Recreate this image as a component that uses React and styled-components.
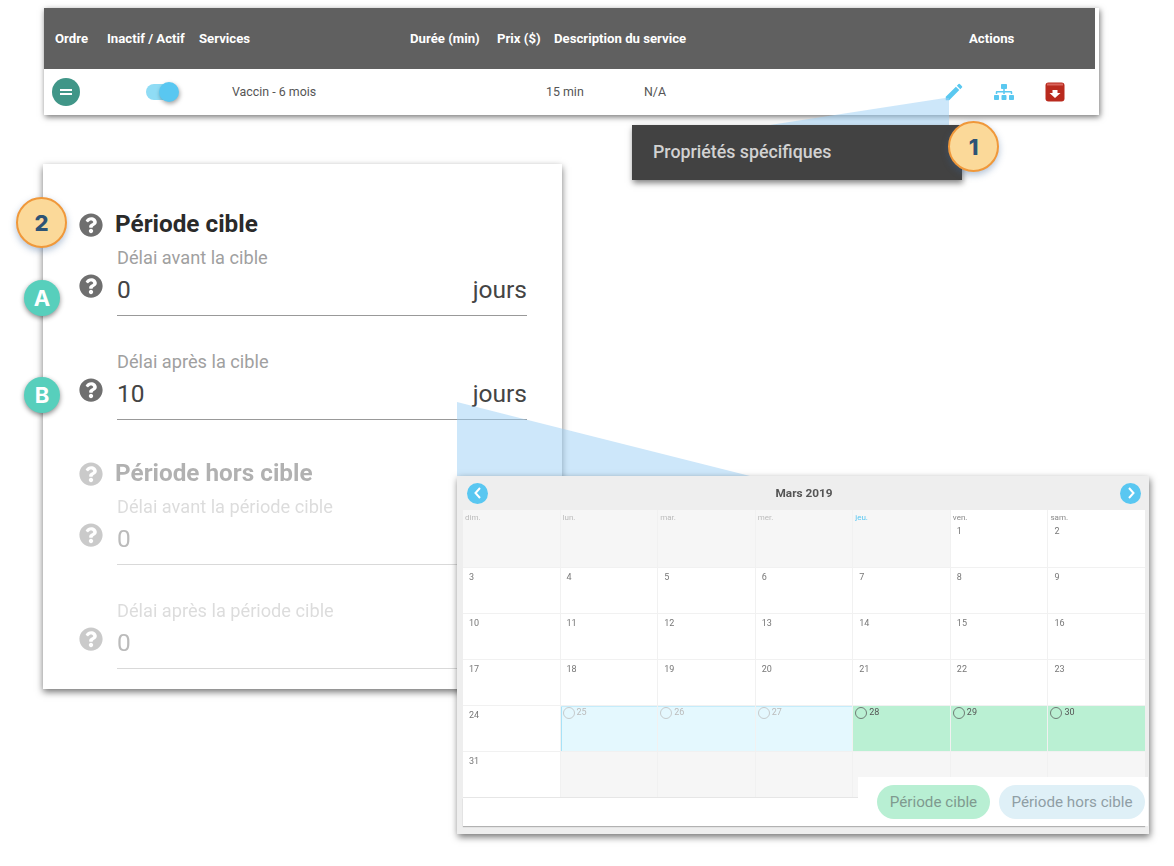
import React from 'react';
import styled, { createGlobalStyle } from 'styled-components';
import { FaQuestionCircle, FaSitemap } from 'react-icons/fa';
import { MdEdit } from 'react-icons/md';

const GlobalStyle = createGlobalStyle`
  html, body {
    margin: 0;
    padding: 0;
    background: #fff;
    font-family: Roboto, "Liberation Sans", sans-serif;
  }
`;

const Page = styled.div`
  position: relative;
  width: 1174px;
  height: 866px;
  padding: 8px 0 0 44px;
  box-sizing: border-box;
  overflow: hidden;
`;

/* table */
const TableCard = styled.div`
  position: relative;
  width: 1055px;
  background: #fff;
  box-shadow: 1px 2px 6px rgba(0, 0, 0, 0.55);
`;
const HeaderRow = styled.div`
  display: grid;
  grid-template-columns: 52px 92px 211px 87px 57px 415px auto;
  align-items: center;
  width: 1051px;
  height: 61px;
  padding-left: 11px;
  box-sizing: border-box;
  background: #606060;
  color: #fff;
  font-size: 13.2px;
  font-weight: 700;
`;
const BodyRow = styled.div`
  display: grid;
  grid-template-columns: 94px 86px 314px 98px 301px 49px 51px auto;
  align-items: center;
  height: 46px;
  padding: 0 0 1px 8px;
  box-sizing: border-box;
  color: #555;
  font-size: 12.4px;
`;
const OrderButton = styled.div`
  display: flex;
  flex-direction: column;
  align-items: center;
  justify-content: center;
  gap: 2px;
  width: 28px;
  height: 28px;
  border-radius: 50%;
  background: #409688;
  &::before,
  &::after {
    content: '';
    width: 12px;
    height: 2px;
    background: #fff;
  }
`;
const Toggle = styled.div`
  position: relative;
  width: 29px;
  height: 16px;
  border-radius: 8px;
  background: #8fdcf5;
  &::after {
    content: '';
    position: absolute;
    left: 13px;
    top: -2px;
    width: 20px;
    height: 20px;
    border-radius: 50%;
    background: #59c7f1;
    box-shadow: 1px 2px 4px rgba(0, 0, 0, 0.35);
  }
`;
const ActionIcon = styled.div`
  display: flex;
  color: #5ac8f0;
`;

/* callouts */
const Wedge = styled.svg`
  position: absolute;
  left: 0;
  top: 0;
  pointer-events: none;
`;
const Tooltip = styled.div`
  position: absolute;
  left: 632px;
  top: 125px;
  display: flex;
  align-items: center;
  width: 330px;
  height: 55px;
  padding: 0 0 2px 21px;
  box-sizing: border-box;
  background: #424242;
  color: #d2d2d2;
  font-size: 17.8px;
  font-weight: 500;
  box-shadow: 1px 3px 6px rgba(0, 0, 0, 0.5);
`;
const NumberBadge = styled.div`
  position: absolute;
  left: ${(p) => p.$left}px;
  top: ${(p) => p.$top}px;
  display: flex;
  align-items: center;
  justify-content: center;
  width: 51px;
  height: 51px;
  box-sizing: border-box;
  border: 2px solid #f0983a;
  border-radius: 50%;
  background: #fbd999;
  color: #2d5375;
  font-family: Inter, sans-serif;
  font-size: 22px;
  font-weight: 800;
  box-shadow: 0 3px 7px rgba(60, 100, 150, 0.4);
`;
const LetterBadge = styled.div`
  position: absolute;
  left: ${(p) => p.$left}px;
  top: ${(p) => p.$top}px;
  display: flex;
  align-items: center;
  justify-content: center;
  width: 36px;
  height: 36px;
  border-radius: 50%;
  background: #57cfbc;
  color: #fff;
  font-family: Inter, sans-serif;
  font-size: 22px;
  font-weight: 700;
  box-shadow: 0 2px 5px rgba(0, 0, 0, 0.45);
`;

/* form */
const FormCard = styled.div`
  position: relative;
  width: 519px;
  height: 525px;
  margin: 49px 0 0 -1px;
  padding: 44px 0 0 36px;
  box-sizing: border-box;
  background: #fff;
  box-shadow: 0 3px 7px rgba(0, 0, 0, 0.55);
`;
const Section = styled.div`
  opacity: ${(p) => (p.$muted ? 0.36 : 1)};
  margin-bottom: ${(p) => (p.$muted ? 0 : 37)}px;
`;
const Heading = styled.div`
  display: flex;
  align-items: center;
  height: 30px;
  margin-bottom: 10px;
  color: #2a2a2a;
  font-size: 24.3px;
  font-weight: 700;
`;
const HelpIcon = styled(FaQuestionCircle)`
  flex: none;
  width: 24px;
  height: 24px;
  color: #6f6f6f;
`;
const HeadingHelp = styled(HelpIcon)`
  margin: 4px 12px 0 0;
`;
const Field = styled.div`
  position: relative;
  display: grid;
  grid-template-columns: 38px 410px;
  & + & {
    margin-top: 36px;
  }
`;
const FieldHelp = styled(HelpIcon)`
  margin-top: 26px;
`;
const Label = styled.div`
  height: 20px;
  color: #a0a0a0;
  font-size: 18.2px;
  line-height: 20px;
`;
const InputRow = styled.div`
  display: flex;
  align-items: center;
  justify-content: space-between;
  height: 48px;
  padding-bottom: 4px;
  box-sizing: border-box;
  border-bottom: 1px solid #999;
  color: #444;
  font-size: 24.5px;
`;

/* calendar */
const Calendar = styled.div`
  position: absolute;
  left: 457px;
  top: 476px;
  width: 692px;
  height: 358px;
  padding: 0 4px 8px 6px;
  box-sizing: border-box;
  background: #eee;
  box-shadow: 1px 3px 7px rgba(0, 0, 0, 0.55);
`;
const CalendarBody = styled.div`
  filter: blur(0.55px);
`;
const CalendarHeader = styled.div`
  display: flex;
  align-items: center;
  justify-content: space-between;
  height: 34px;
  padding: 0 4px;
  color: #555;
  font-size: 11.8px;
  font-weight: 700;
`;
const NavButton = styled.div`
  display: flex;
  align-items: center;
  justify-content: center;
  width: 21px;
  height: 21px;
  border-radius: 50%;
  background: #59c7f1;
`;
const Grid = styled.div`
  display: grid;
  grid-template-columns: repeat(7, 1fr);
  grid-template-rows: 57px 45px 45px 45px 45px 45px;
  gap: 1px;
  background: #f1f1f1;
  border-bottom: 1px solid #e6e6e6;
`;
const cellColors = { white: '#fff', off: '#f6f6f6', target: '#e4f8fe', green: '#baf0d3' };
const Cell = styled.div`
  padding: ${(p) => (p.$marked ? '1px 0 0 2px' : '4px 0 0 6px')};
  background: ${(p) => cellColors[p.$kind]};
  color: ${(p) => (p.$kind === 'target' ? '#bbb' : p.$kind === 'green' ? '#555' : '#777')};
  font-size: 9px;
  line-height: 10px;
  box-shadow: ${(p) =>
    p.$kind === 'target'
      ? `inset 0 1px 0 #c5ecfa${p.$first ? ', inset 1px 0 0 #a8e2f7' : ''}`
      : 'none'};
`;
const Weekday = styled.div`
  margin: 0 0 2px -4px;
  height: 10px;
  color: ${(p) => (p.$today ? '#59c7f1' : p.$off ? '#bbb' : '#888')};
  font-size: 8px;
  line-height: 8px;
`;
const DayMark = styled.div`
  display: flex;
  align-items: flex-start;
  gap: 2px;
  &::before {
    content: '';
    width: 12px;
    height: 12px;
    box-sizing: border-box;
    border: 1.5px solid currentColor;
    border-radius: 50%;
    opacity: 0.75;
  }
`;
const CalendarFooter = styled.div`
  height: 28px;
  background: #fff;
  box-shadow: 0 1px 1px rgba(0, 0, 0, 0.25);
`;
const Legend = styled.div`
  position: absolute;
  right: 1px;
  bottom: 8px;
  display: flex;
  justify-content: flex-end;
  gap: 9px;
  width: 290px;
  height: 49px;
  padding: 8px 3px 0 0;
  box-sizing: border-box;
  background: #fff;
`;
const Pill = styled.div`
  display: flex;
  align-items: center;
  justify-content: center;
  width: ${(p) => p.$width}px;
  height: 34px;
  border-radius: 17px;
  background: ${(p) => p.$bg};
  color: ${(p) => p.$color};
  font-size: 15.2px;
`;

const PencilIcon = () => (
  <ActionIcon>
    <MdEdit size={22} style={{ margin: '-2px' }} />
  </ActionIcon>
);

const ArchiveIcon = () => (
  <svg width="20" height="20" viewBox="0 0 20 20">
    <rect x="0.5" y="0.5" width="19" height="19" rx="3" fill="#b92a1e" />
    <rect x="2" y="1.5" width="16" height="2" fill="#d9655c" />
    <path d="M7.5 8h5v3h3L10 16 4.5 11h3z" fill="#fff" />
  </svg>
);

const Chevron = ({ d }) => (
  <svg width="10" height="12" viewBox="0 0 10 12">
    <path d={d} fill="none" stroke="#fff" strokeWidth="2" />
  </svg>
);

const weekdays = ['dim.', 'lun.', 'mar.', 'mer.', 'jeu.', 'ven.', 'sam.'];

const days = [];
for (let i = -4; i <= 37; i++) days.push(i);

const kindOf = (d) => {
  if (d < 1) return 'off';
  if (d > 31) return 'off';
  if (d >= 25 && d <= 27) return 'target';
  if (d >= 28 && d <= 30) return 'green';
  return 'white';
};

const MonthGrid = () => (
  <Grid>
    {days.map((d, i) => {
      const kind = kindOf(d);
      const marked = d >= 25 && d <= 30;
      return (
        <Cell key={d} $kind={kind} $marked={marked} $first={d === 25}>
          {i < 7 && (
            <Weekday $today={i === 4} $off={d < 1}>
              {weekdays[i]}
            </Weekday>
          )}
          {d >= 1 && d <= 31 && (marked ? <DayMark>{d}</DayMark> : d)}
        </Cell>
      );
    })}
  </Grid>
);

const DelayField = ({ label, value, unit, children }) => (
  <Field>
    <FieldHelp />
    <div>
      <Label>{label}</Label>
      <InputRow>
        <span>{value}</span>
        {unit && <span>{unit}</span>}
      </InputRow>
    </div>
    {children}
  </Field>
);

export default function App() {
  return (
    <Page>
      <GlobalStyle />
      <TableCard>
        <HeaderRow>
          <span>Ordre</span>
          <span>Inactif / Actif</span>
          <span>Services</span>
          <span>Durée (min)</span>
          <span>Prix ($)</span>
          <span>Description du service</span>
          <span>Actions</span>
        </HeaderRow>
        <BodyRow>
          <OrderButton />
          <Toggle />
          <span>Vaccin - 6 mois</span>
          <span>15 min</span>
          <span>N/A</span>
          <PencilIcon />
          <ActionIcon>
            <FaSitemap size={20} />
          </ActionIcon>
          <ArchiveIcon />
        </BodyRow>
      </TableCard>

      <FormCard>
        <Section>
          <Heading>
            <HeadingHelp />
            Période cible
          </Heading>
          <DelayField label="Délai avant la cible" value="0" unit="jours">
            <LetterBadge $left={-55} $top={32}>A</LetterBadge>
          </DelayField>
          <DelayField label="Délai après la cible" value="10" unit="jours">
            <LetterBadge $left={-55} $top={25}>B</LetterBadge>
          </DelayField>
        </Section>
        <Section $muted>
          <Heading>
            <HeadingHelp />
            Période hors cible
          </Heading>
          <DelayField label="Délai avant la période cible" value="0" />
          <DelayField label="Délai après la période cible" value="0" />
        </Section>
        <NumberBadge $left={-27} $top={33}>2</NumberBadge>
      </FormCard>

      <Wedge width="1174" height="866">
        <polygon points="945,98 949,98 949,125 770,125" fill="rgba(155,208,245,0.5)" />
        <polygon points="457,402 750,476 457,476" fill="rgba(155,208,245,0.5)" />
      </Wedge>

      <Tooltip>Propriétés spécifiques</Tooltip>
      <NumberBadge $left={948} $top={121}>1</NumberBadge>

      <Calendar>
        <CalendarBody>
          <CalendarHeader>
            <NavButton>
              <Chevron d="M7 1 2.5 6 7 11" />
            </NavButton>
            <span>Mars 2019</span>
            <NavButton>
              <Chevron d="M3 1l4.5 5L3 11" />
            </NavButton>
          </CalendarHeader>
          <MonthGrid />
          <CalendarFooter />
        </CalendarBody>
        <Legend>
          <Pill $width={113} $bg="#b8efd3" $color="#7f9a8f">Période cible</Pill>
          <Pill $width={146} $bg="#dff0f7" $color="#8f9ea5">Période hors cible</Pill>
        </Legend>
      </Calendar>
    </Page>
  );
}
